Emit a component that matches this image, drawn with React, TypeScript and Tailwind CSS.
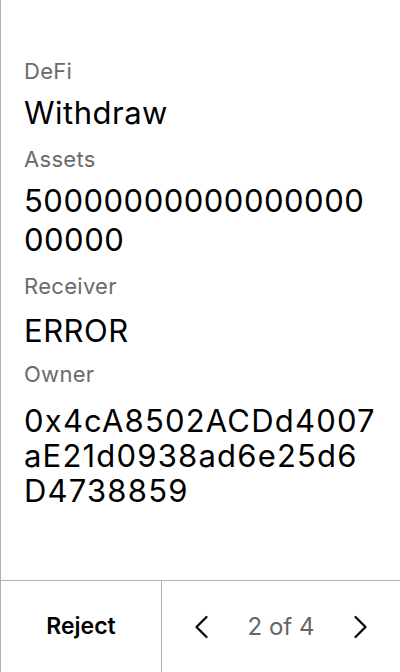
const labelCls = 'text-[22px] leading-[28px] tracking-[0.3px] text-[#6b6b6b]'
const valueCls = 'text-[31px] text-black break-all'

function Chevron({ dir }: { dir: 'left' | 'right' }) {
  return (
    <svg width="16" height="24" viewBox="0 0 16 24" fill="none" stroke="#111" strokeWidth="2.4" strokeLinecap="round" strokeLinejoin="round">
      {dir === 'left' ? <path d="M13.5 2 L3.5 12 L13.5 22" /> : <path d="M2.5 2 L12.5 12 L2.5 22" />}
    </svg>
  )
}

export default function App() {
  return (
    <div
      className="flex h-screen w-full flex-col border-l border-[#b0b0b0] bg-white"
      style={{ fontFamily: 'Inter, "Noto Sans", sans-serif' }}
    >
      <div className="flex flex-1 flex-col pl-[23px] pr-6 pt-[57px]">
        <div className={labelCls}>DeFi</div>
        <div className={`${valueCls} mt-[10px] leading-[36px] tracking-[0.5px]`}>Withdraw</div>
        <div className={`${labelCls} mt-[14px]`}>Assets</div>
        <div className={`${valueCls} mt-[8px] leading-[39px] tracking-[0.5px]`}>
          50000000000000000
          <br />
          00000
        </div>
        <div className={`${labelCls} mt-[13px]`}>Receiver</div>
        <div className={`${valueCls} mt-[13px] leading-[36px] tracking-[0.5px]`}>ERROR</div>
        <div className={`${labelCls} mt-[11px]`}>Owner</div>
        <div className={`${valueCls} mt-[15px] leading-[35px] tracking-[1.2px]`}>
          0x4cA8502ACDd4007
          <br />
          aE21d0938ad6e25d6
          <br />
          D4738859
        </div>
      </div>
      <div className="flex h-[92px] border-t border-[#b0b0b0]">
        <button className="flex w-[160px] items-center justify-center text-[23px] font-semibold text-black">
          Reject
        </button>
        <div className="flex flex-1 items-center justify-between border-l border-[#b0b0b0] px-[31px]">
          <button className="flex items-center">
            <Chevron dir="left" />
          </button>
          <span className="text-[24px] text-[#666]">2 of 4</span>
          <button className="flex items-center">
            <Chevron dir="right" />
          </button>
        </div>
      </div>
    </div>
  )
}
